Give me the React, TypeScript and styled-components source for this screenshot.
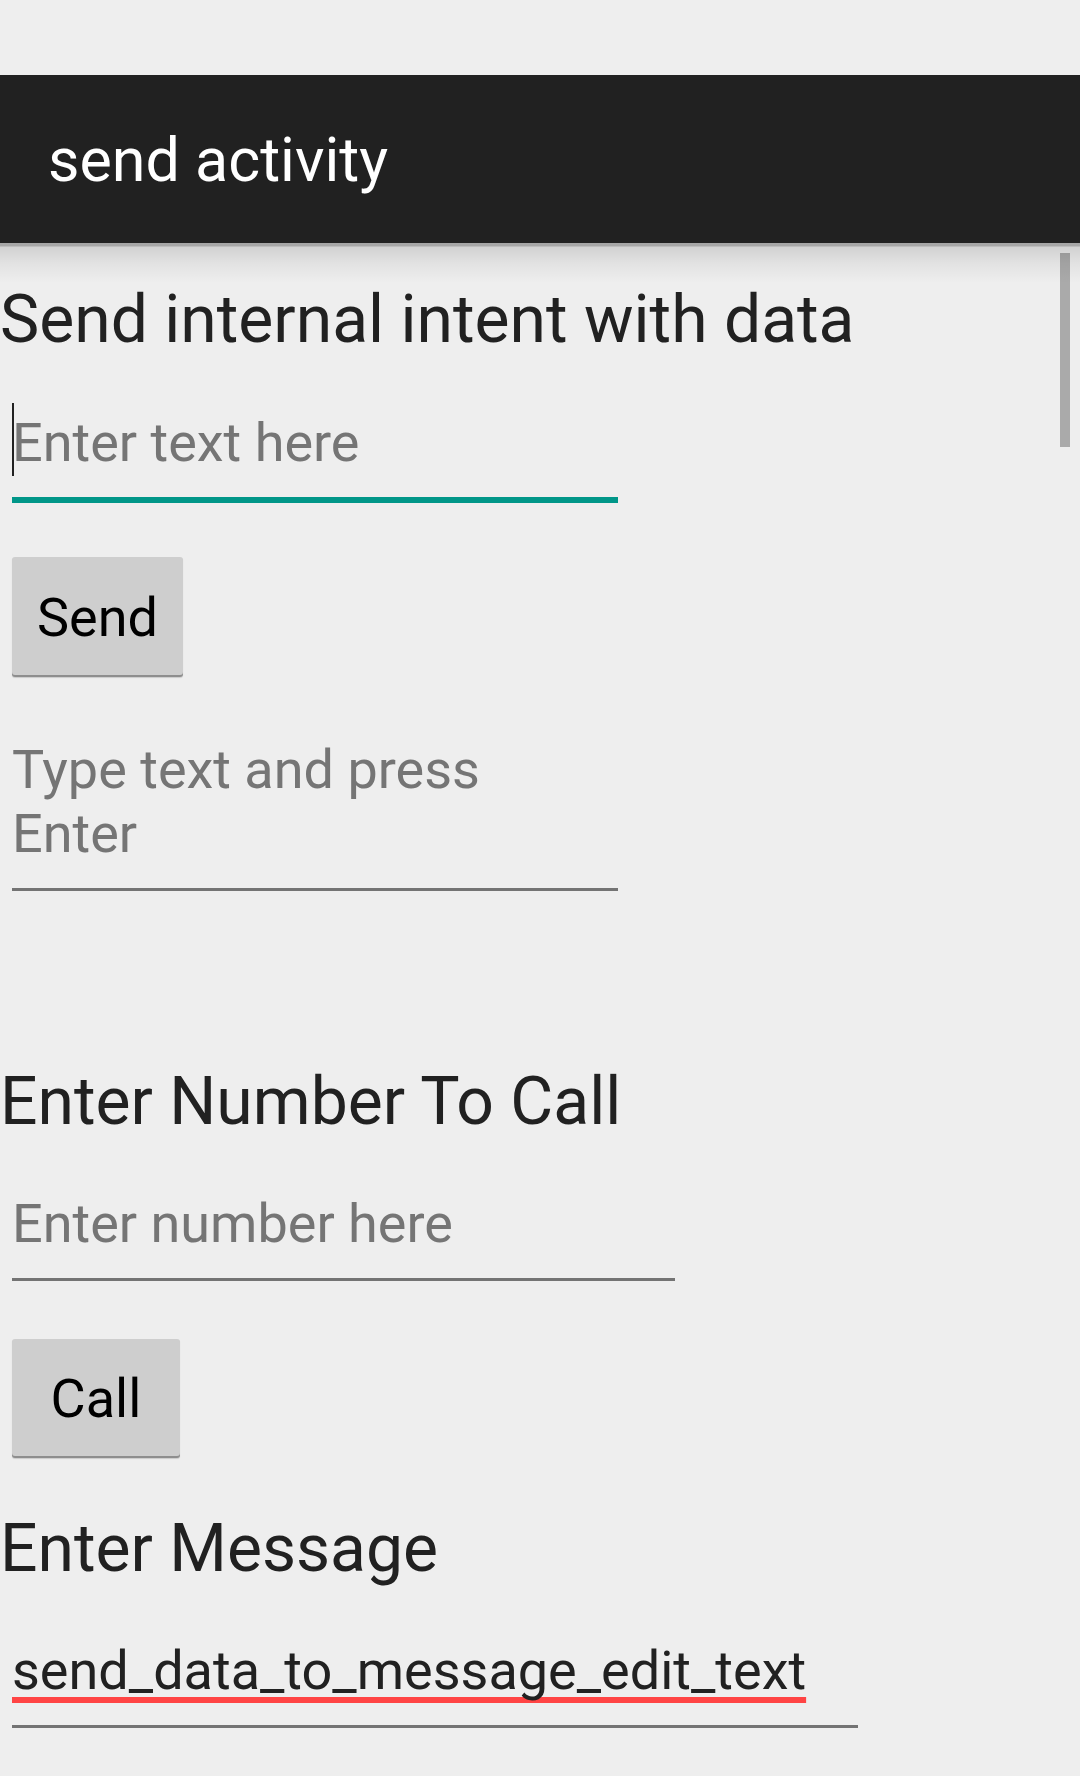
import React from "react";
import styled, { createGlobalStyle } from "styled-components";

const GlobalStyle = createGlobalStyle`
  html, body {
    margin: 0;
    padding: 0;
    background: #eeeeee;
  }
  body {
    font-family: Roboto, "Noto Sans", "Liberation Sans", sans-serif;
  }
`;

const Screen = styled.div`
  width: 1080px;
  height: 1776px;
  background: #eeeeee;
  overflow: hidden;
  display: flex;
  flex-direction: column;
`;

const StatusBar = styled.div`
  height: 75px;
  background: #eeeeee;
`;

const AppBar = styled.div`
  height: 168px;
  background: #212121;
  display: flex;
  align-items: center;
  padding-left: 48px;
  position: relative;
  z-index: 1;

  &::after {
    content: "";
    position: absolute;
    left: 0;
    right: 0;
    top: 100%;
    height: 40px;
    background: linear-gradient(
      rgba(0, 0, 0, 0.3) 0px,
      rgba(0, 0, 0, 0.3) 3px,
      rgba(0, 0, 0, 0.12) 4px,
      rgba(0, 0, 0, 0.05) 20px,
      rgba(0, 0, 0, 0) 40px
    );
  }
`;

const AppTitle = styled.div`
  color: #ffffff;
  font-size: 61px;
  line-height: 72px;
  margin-top: 2px;
`;

const Content = styled.div`
  position: relative;
  flex: 1;
  display: flex;
  flex-direction: column;
  align-items: flex-start;
`;

const ScrollThumb = styled.div`
  position: absolute;
  top: 10px;
  right: 10px;
  width: 10px;
  height: 194px;
  background: #aaaaaa;
`;

const Heading = styled.div<{ $top: number }>`
  margin-top: ${({ $top }) => $top}px;
  color: #212121;
  font-size: 66px;
  line-height: 80px;
  white-space: nowrap;
`;

const Field = styled.div<{ $top: number; $width: number; $line: string; $thick: number }>`
  position: relative;
  margin-top: ${({ $top }) => $top}px;
  margin-left: 12px;
  width: ${({ $width }) => $width}px;
  padding-bottom: 22px;
  border-bottom: ${({ $thick, $line }) => `${$thick}px solid ${$line}`};
  font-size: 54px;
  line-height: 64px;
  white-space: nowrap;
`;

const Placeholder = styled.span`
  color: #757575;
`;

const Value = styled.span`
  color: #212121;
  text-decoration: underline;
  text-decoration-color: #ff4444;
  text-decoration-thickness: 6px;
  text-underline-offset: 8px;
  text-decoration-skip-ink: none;
`;

const Caret = styled.span`
  position: absolute;
  left: 0;
  top: -8px;
  width: 2px;
  height: 73px;
  background: #212121;
`;

const Button = styled.button<{ $top: number; $width: number; $height: number }>`
  margin-top: ${({ $top }) => $top}px;
  margin-left: 12px;
  width: ${({ $width }) => $width}px;
  height: ${({ $height }) => $height}px;
  background: #cecece;
  border: none;
  border-radius: 3px;
  box-shadow: inset 0 -2px 0 #8e8e8e, 0 1px 1px rgba(0, 0, 0, 0.15);
  color: #000000;
  font-family: Roboto, "Liberation Sans", sans-serif;
  font-size: 54px;
  padding: 0;
  display: flex;
  align-items: center;
  justify-content: center;
`;

export default function App() {
  return (
    <>
      <GlobalStyle />
      <Screen>
        <StatusBar />
        <AppBar>
          <AppTitle>send activity</AppTitle>
        </AppBar>
        <Content>
          <ScrollThumb />
          <Heading $top={37}>Send internal intent with data</Heading>
          <Field $top={51} $width={606} $line="#009688" $thick={6}>
            <Caret />
            <Placeholder>Enter text here</Placeholder>
          </Field>
          <Button $top={54} $width={171} $height={120}>
            Send
          </Button>
          <Field $top={61} $width={606} $line="#737373" $thick={3}>
            <Placeholder>
              Type text and press
              <br />
              Enter
            </Placeholder>
          </Field>
          <Heading $top={171}>Enter Number To Call</Heading>
          <Field $top={50} $width={663} $line="#737373" $thick={3}>
            <Placeholder>Enter number here</Placeholder>
          </Field>
          <Button $top={58} $width={168} $height={119}>
            Call
          </Button>
          <Heading $top={51}>Enter Message</Heading>
          <Field $top={50} $width={846} $line="#737373" $thick={3}>
            <Value>send_data_to_message_edit_text</Value>
          </Field>
        </Content>
      </Screen>
    </>
  );
}
